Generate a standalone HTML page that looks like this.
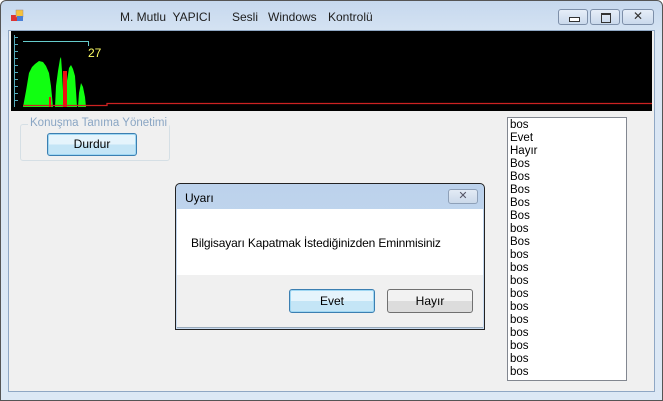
<!DOCTYPE html>
<html><head><style>
body{margin:0;width:663px;height:401px;overflow:hidden;font-family:"Liberation Sans",sans-serif;font-size:12px;position:relative;background:#fff}
.frame{position:absolute;left:0;top:0;width:661px;height:399px;border:1px solid #555;border-radius:6px 6px 0 0;background:linear-gradient(#c6d8ee,#d9e6f4 40px,#dce8f5)}
.client{position:absolute;left:8px;top:30px;width:647px;height:362px;background:#f0f0f0;border:1px solid #8fa7c4;box-sizing:border-box}
.t{position:absolute;top:10px;color:#1e1e1e;font-size:12px}
.wb{position:absolute;top:9px;height:16px;border:1px solid #7d8fa9;border-radius:3px;background:linear-gradient(#e6eef8,#cad9ec);box-sizing:border-box}
.btn{position:absolute;border:1px solid #707070;border-radius:3px;background:linear-gradient(#f2f2f2 50%,#dcdcdc 50%);text-align:center;box-sizing:border-box;font-size:12px;color:#000}
.btn.b{border-color:#3c7fb1;background:linear-gradient(#e5f4fc 50%,#c4e5f6 50%);box-shadow:inset 0 0 0 1px #9fd7f3}
.lb{position:absolute;left:507px;top:117px;width:120px;height:264px;border:1px solid #828790;background:#fff;box-sizing:border-box;padding:1px 0 0 2px;line-height:13px;font-size:11.5px;overflow:hidden}
</style></head><body>
<div class="frame"></div>
<svg style="position:absolute;left:11px;top:9px" width="14" height="14"><rect x="0" y="6" width="6" height="6" fill="#d33"/><rect x="5" y="1" width="7" height="7" fill="#f6c23a" stroke="#a87" stroke-width=".5"/><rect x="6" y="7" width="6" height="5" fill="#4a7fd6"/></svg>
<div class="t" style="left:120px">M. Mutlu&nbsp; YAPICI</div>
<div class="t" style="left:232px">Sesli</div>
<div class="t" style="left:268px">Windows</div>
<div class="t" style="left:328px">Kontrolü</div>
<div class="wb" style="left:558px;width:30px"><div style="position:absolute;left:10px;top:7px;width:9px;height:3px;border:1px solid #333;background:#fff"></div></div>
<div class="wb" style="left:590px;width:30px"><div style="position:absolute;left:10px;top:3px;width:8px;height:7px;border:1px solid #333;border-top-width:2px"></div></div>
<div class="wb" style="left:622px;width:32px;text-align:center;line-height:13px;color:#333;font-size:12px">✕</div>
<div class="client"></div>
<svg style="position:absolute;left:11px;top:31px" width="641" height="80">
<rect width="641" height="80" fill="#000"/>
<g stroke="#5ab" stroke-width="1"><line x1="3.5" y1="4" x2="3.5" y2="76"/>
<line x1="3" y1="6.5" x2="7" y2="6.5"/><line x1="3" y1="13.5" x2="7" y2="13.5"/><line x1="3" y1="20.5" x2="7" y2="20.5"/><line x1="3" y1="27.5" x2="7" y2="27.5"/><line x1="3" y1="34.5" x2="7" y2="34.5"/><line x1="3" y1="41.5" x2="7" y2="41.5"/><line x1="3" y1="48.5" x2="7" y2="48.5"/><line x1="3" y1="55.5" x2="7" y2="55.5"/><line x1="3" y1="62.5" x2="7" y2="62.5"/><line x1="3" y1="69.5" x2="7" y2="69.5"/></g>
<polyline points="12,10.5 77.5,10.5 77.5,15" fill="none" stroke="#6cc" stroke-width="1"/>
<text x="77" y="26" fill="#ff6" font-size="12" font-family="Liberation Sans">27</text>
<polygon fill="#1f1" points="12,76 15,60 18,42 21,36 24,33 28,30 32,31 35,35 38,42 40,55 42,76"/>
<polygon fill="#1f1" points="44,76 45,55 47,40 49,28 50,26 51,40 52,60 53,76"/>
<polygon fill="#1f1" points="55,76 56,50 58,37 60,34 62,38 64,45 65,60 66,76"/>
<polygon fill="#1f1" points="67,76 68,62 70,52 72,56 74,66 75,76"/>
<rect x="52" y="40" width="4" height="36" fill="#e11"/>
<rect x="38" y="66" width="2" height="10" fill="#e11"/>
<polyline points="12,74.5 96,74.5 96,72.5 641,72.5" fill="none" stroke="#c22" stroke-width="1.3"/>
</svg>
<div style="position:absolute;left:20px;top:124px;width:148px;height:35px;border:1px solid #d5dfe5;border-radius:3px"></div>
<div style="position:absolute;left:28px;top:117px;background:#f0f0f0;color:#8aa6c4;font-size:11.5px;padding:0 2px">Konuşma Tanıma Yönetimi</div>
<div class="btn b" style="left:47px;top:133px;width:90px;height:23px;line-height:21px">Durdur</div>
<div class="lb">bos<br>Evet<br>Hayır<br>Bos<br>Bos<br>Bos<br>Bos<br>Bos<br>bos<br>Bos<br>bos<br>bos<br>bos<br>bos<br>bos<br>bos<br>bos<br>bos<br>bos<br>bos</div>
<div style="position:absolute;left:175px;top:183px;width:310px;height:147px;border:1px solid #222;border-radius:5px 5px 0 0;background:linear-gradient(#bcd2ec,#c9dbf0);box-sizing:border-box">
<div style="position:absolute;left:9px;top:7px;color:#000">Uyarı</div>
<div style="position:absolute;left:272px;top:5px;width:30px;height:15px;border:1px solid #8ea0b8;border-radius:3px;background:linear-gradient(#e3ebf5,#cbd9ea);box-sizing:border-box;text-align:center;line-height:13px;color:#556;font-size:11px">✕</div>
<div style="position:absolute;left:1px;top:25px;width:306px;height:118px;background:#f0f0f0;border-bottom:1px solid #9ab">
<div style="position:absolute;left:0;top:0;width:306px;height:66px;background:#fff"></div>
<div style="position:absolute;left:14px;top:27px;color:#000;letter-spacing:-0.15px">Bilgisayarı Kapatmak İstediğinizden Eminmisiniz</div>
<div class="btn b" style="left:112px;top:80px;width:86px;height:24px;line-height:22px">Evet</div>
<div class="btn" style="left:210px;top:80px;width:86px;height:24px;line-height:22px">Hayır</div>
</div></div>
</body></html>
